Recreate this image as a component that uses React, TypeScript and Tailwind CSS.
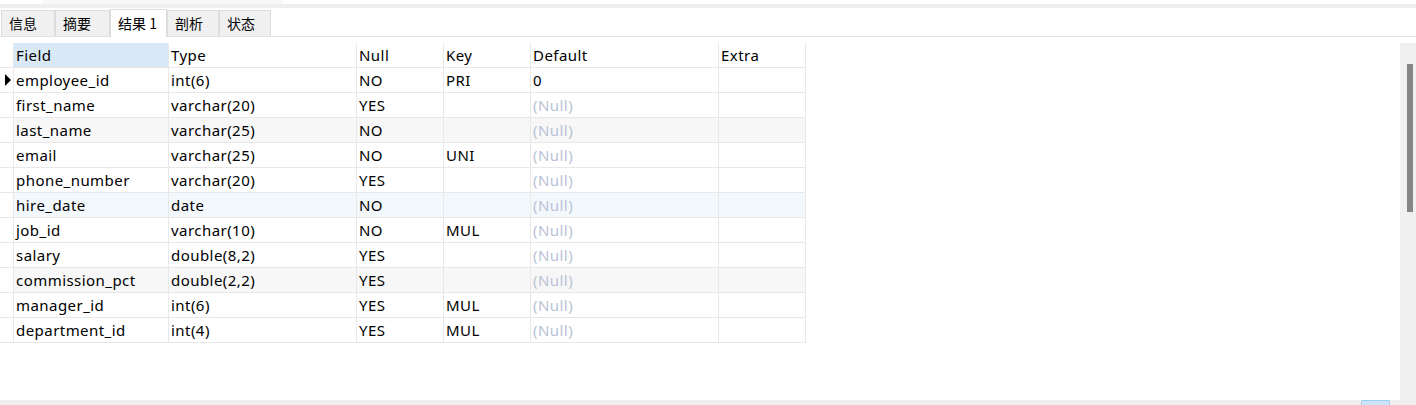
const rows = [
  ["employee_id", "int(6)", "NO", "PRI", "0"],
  ["first_name", "varchar(20)", "YES", "", null],
  ["last_name", "varchar(25)", "NO", "", null],
  ["email", "varchar(25)", "NO", "UNI", null],
  ["phone_number", "varchar(20)", "YES", "", null],
  ["hire_date", "date", "NO", "", null],
  ["job_id", "varchar(10)", "NO", "MUL", null],
  ["salary", "double(8,2)", "YES", "", null],
  ["commission_pct", "double(2,2)", "YES", "", null],
  ["manager_id", "int(6)", "YES", "MUL", null],
  ["department_id", "int(4)", "YES", "MUL", null],
];

const tabs = ["信息", "摘要", "结果 1", "剖析", "状态"];
const tabW = ["w-[54px]", "w-[55px]", "w-[57px]", "w-[52px]", "w-[52px]"];

const cols = "grid grid-cols-[14px_155px_188px_87px_87px_188px_87px]";
const cell = "h-[25px] border-b border-r border-[#e8e8e8] pl-[2px] flex items-center whitespace-nowrap tracking-[0.45px]";

export default function App() {
  return (
    <div
      className="w-[1416px] h-[405px] flex flex-col overflow-hidden bg-white text-black text-[15px]"
      style={{ fontFamily: '"Noto Sans", "Noto Sans CJK SC", sans-serif' }}
    >
      <div className="h-[4px] flex">
        <div className="w-[43px] bg-white" />
        <div className="w-[240px] bg-[#f8f8f8]" />
        <div className="flex-1 bg-white" />
      </div>
      <div className="h-[4px] bg-[#efefef]" />
      <div className="h-[29px] flex items-end border-b border-[#e0e0e0]">
        {tabs.map((t, i) =>
          i === 2 ? (
            <div
              key={t}
              className={`${tabW[i]} h-[28px] mb-[-1px] bg-white border border-b-0 border-[#dcdcdc] pl-[7px] flex items-center text-[14px]`}
              style={{ fontFamily: '"Noto Sans CJK SC", sans-serif' }}
            >
              {t}
            </div>
          ) : (
            <div
              key={t}
              className={`${tabW[i]} h-[26px] bg-[#f0f0f0] border-l border-t border-r border-[#dcdcdc] pl-[7px] flex items-center text-[14px] ${i === 0 ? "ml-[1px]" : ""}`}
              style={{ fontFamily: '"Noto Sans CJK SC", sans-serif' }}
            >
              {t}
            </div>
          )
        )}
      </div>
      <div className="flex-1 flex pt-[6px] min-h-0">
        <div className="flex-1">
          <div className={`${cols} w-max`}>
            <div className="h-[25px] border-b border-r border-[#e8e8e8]" />
            <div className={`${cell} bg-[#d9e8f7]`}>Field</div>
            <div className={cell}>Type</div>
            <div className={cell}>Null</div>
            <div className={cell}>Key</div>
            <div className={cell}>Default</div>
            <div className={cell}>Extra</div>
            {rows.map((r, i) => {
              const bg = i === 5 ? "bg-[#f3f8fd]" : i % 3 === 2 ? "bg-[#f7f7f7]" : "bg-white";
              return [
                <div key={`m${i}`} className="h-[25px] border-b border-r border-[#e8e8e8] flex items-center pl-[5px]">
                  {i === 0 && (
                    <span className="block w-0 h-0 border-y-[6px] border-y-transparent border-l-[6px] border-l-black" />
                  )}
                </div>,
                ...r.map((v, j) => (
                  <div key={`${i}-${j}`} className={`${cell} ${bg}`}>
                    {v === null ? <span className="text-[#b9c2d6]">(Null)</span> : v}
                  </div>
                )),
                <div key={`e${i}`} className={`${cell} ${bg}`} />,
              ];
            })}
          </div>
        </div>
        <div className="w-[16px] bg-[#f0f0f0] pt-[21px] pl-[7px]">
          <div className="w-[6px] h-[148px] bg-[#858585]" />
        </div>
      </div>
      <div className="h-[5px] bg-[#efefef] flex justify-end pr-[26px]">
        <div className="w-[29px] h-[5px] bg-[#cce4f7] border border-b-0 border-[#99ccee] rounded-t-[2px]" />
      </div>
    </div>
  );
}
